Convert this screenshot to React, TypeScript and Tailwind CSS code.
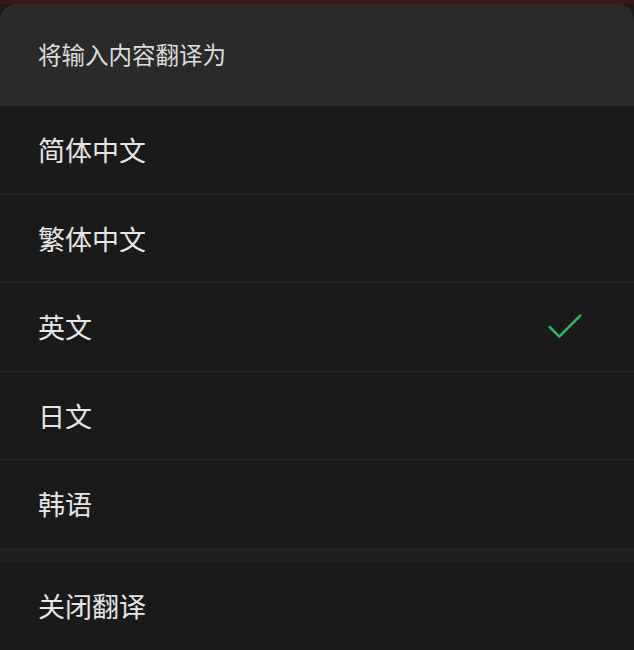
import { Check } from "lucide-react";

const languages = ["简体中文", "繁体中文", "英文", "日文", "韩语"];
const selected = "英文";

export default function App() {
  return (
    <div
      className="relative h-[650px] w-[634px] overflow-hidden bg-[#1b1b1b]"
      style={{ fontFamily: '"Noto Sans CJK SC", "Noto Sans", sans-serif' }}
    >
      <div className="h-[4px] bg-[#3a1618]" />
      <div className="overflow-hidden rounded-t-[16px] bg-[#1a1a1a]">
        <div className="flex h-[102px] items-center bg-[#2a2a2a] px-[38px]">
          <span className="text-[23.5px] leading-none text-[#dcdcdc]">将输入内容翻译为</span>
        </div>

        {languages.map((lang, i) => (
          <div key={lang}>
            {i > 0 ? <div className="h-px bg-[#262626]" /> : null}
            <div className="flex h-[87.5px] items-center justify-between pl-[38px] pr-[46px]">
              <span className="text-[27px] leading-none text-[#e6e6e6]">{lang}</span>
              {lang === selected ? (
                <Check className="h-[46px] w-[46px] text-[#2ab865]" strokeWidth={1.3} />
              ) : null}
            </div>
          </div>
        ))}

        <div className="h-px bg-[#262626]" />
        <div className="h-[13px] bg-[#202020]" />
        <div className="flex h-[88px] items-center px-[38px]">
          <span className="text-[27px] leading-none text-[#e6e6e6]">关闭翻译</span>
        </div>
      </div>
    </div>
  );
}
